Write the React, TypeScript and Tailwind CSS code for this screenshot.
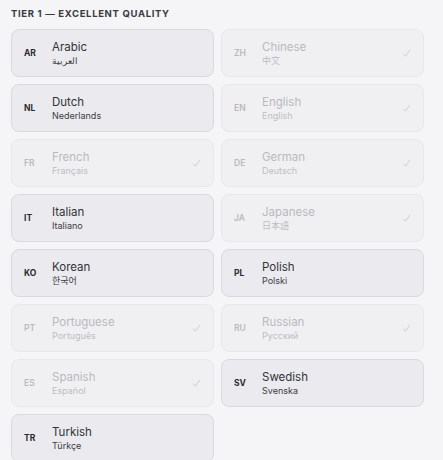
import React from "react";

type Lang = { code: string; name: string; native: string; enabled: boolean };

const langs: Lang[] = [
  { code: "AR", name: "Arabic", native: "العربية", enabled: true },
  { code: "ZH", name: "Chinese", native: "中文", enabled: false },
  { code: "NL", name: "Dutch", native: "Nederlands", enabled: true },
  { code: "EN", name: "English", native: "English", enabled: false },
  { code: "FR", name: "French", native: "Français", enabled: false },
  { code: "DE", name: "German", native: "Deutsch", enabled: false },
  { code: "IT", name: "Italian", native: "Italiano", enabled: true },
  { code: "JA", name: "Japanese", native: "日本語", enabled: false },
  { code: "KO", name: "Korean", native: "한국어", enabled: true },
  { code: "PL", name: "Polish", native: "Polski", enabled: true },
  { code: "PT", name: "Portuguese", native: "Português", enabled: false },
  { code: "RU", name: "Russian", native: "Русский", enabled: false },
  { code: "ES", name: "Spanish", native: "Español", enabled: false },
  { code: "SV", name: "Swedish", native: "Svenska", enabled: true },
  { code: "TR", name: "Turkish", native: "Türkçe", enabled: true },
];

function Check() {
  return (
    <svg width="9" height="9" viewBox="0 0 10 10" fill="none" className="shrink-0">
      <polyline points="1.5,5.5 3.8,8 8.5,1.5" stroke="#c4c4ca" strokeWidth="0.9" strokeLinecap="round" strokeLinejoin="round" />
    </svg>
  );
}

function Card({ l }: { l: Lang }) {
  return (
    <div
      className={
        l.enabled
          ? "h-[48px] flex items-center rounded-lg border border-[#d9d9df] bg-[#eaeaef] pl-[12px] pr-[12px]"
          : "h-[48px] flex items-center rounded-lg border border-[#e8e8ec] bg-[#f0f0f3] pl-[12px] pr-[12px]"
      }
    >
      <div
        className={
          l.enabled
            ? "w-[28px] shrink-0 text-[8.5px] font-bold text-[#2a2a2e]"
            : "w-[28px] shrink-0 text-[8.5px] font-semibold text-[#b9b9bf]"
        }
      >
        {l.code}
      </div>
      <div className="flex-1 flex flex-col">
        <div className={l.enabled ? "text-[11.5px] leading-[14px] text-[#333338]" : "text-[11.5px] leading-[14px] text-[#b9b9bf]"}>
          {l.name}
        </div>
        <div className={l.enabled ? "text-[9px] leading-[13px] text-[#3c3c42]" : "text-[9px] leading-[13px] text-[#bdbdc3]"}>
          {l.native}
        </div>
      </div>
      {!l.enabled && <Check />}
    </div>
  );
}

export default function App() {
  return (
    <div
      className="w-[443px] h-[460px] overflow-hidden bg-[#f5f5f7] pl-[11px] pr-[19px] pt-[8px]"
      style={{ fontFamily: "Inter, 'Noto Sans', 'Noto Sans CJK JP', 'Noto Sans CJK KR', sans-serif" }}
    >
      <div className="text-[9.5px] leading-[12px] font-bold tracking-[0.07em] text-[#3a3a40] mb-[9px]">
        TIER 1 — EXCELLENT QUALITY
      </div>
      <div className="grid grid-cols-2 gap-[7px]">
        {langs.map((l) => (
          <Card key={l.code} l={l} />
        ))}
      </div>
    </div>
  );
}
